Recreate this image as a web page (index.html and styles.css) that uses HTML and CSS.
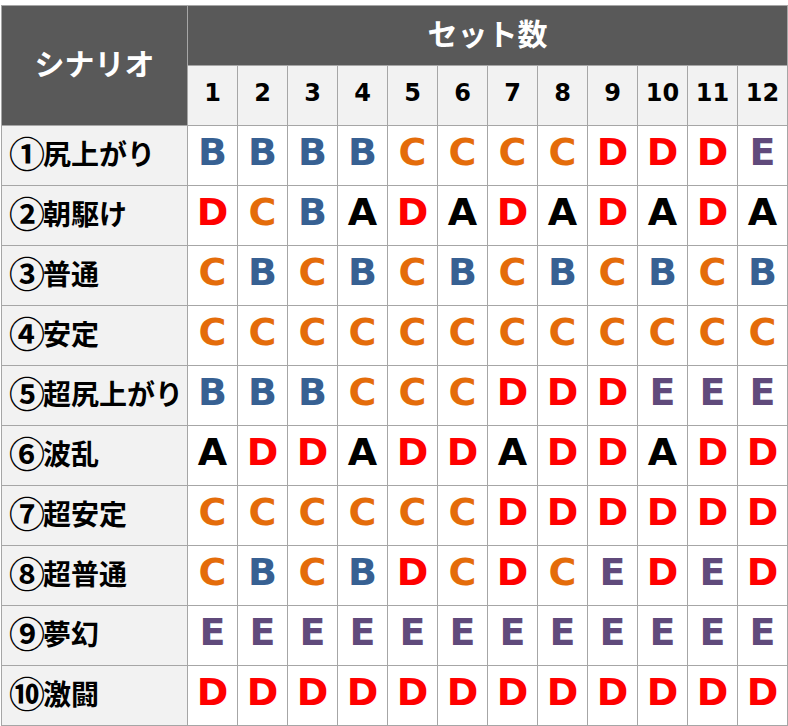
FILE: index.html
```html
<!DOCTYPE html>
<html lang="ja">
<head>
<meta charset="utf-8">
<link rel="stylesheet" href="styles.css">
</head>
<body>
<table class="grid">
  <colgroup>
    <col class="col-name">
    <col class="col-set"><col class="col-set"><col class="col-set"><col class="col-set"><col class="col-set"><col class="col-set">
    <col class="col-set"><col class="col-set"><col class="col-set"><col class="col-set"><col class="col-set"><col class="col-set">
  </colgroup>
  <thead>
    <tr>
      <th class="hd-dark hd-scen" rowspan="2">シナリオ</th>
      <th class="hd-dark hd-sets" colspan="12">セット数</th>
    </tr>
    <tr class="nums">
      <th>1</th><th>2</th><th>3</th><th>4</th><th>5</th><th>6</th><th>7</th><th>8</th><th>9</th><th>10</th><th>11</th><th>12</th>
    </tr>
  </thead>
  <tbody>
    <tr><th class="name"><span class="circ">①</span>尻上がり</th><td class="b">B</td><td class="b">B</td><td class="b">B</td><td class="b">B</td><td class="c">C</td><td class="c">C</td><td class="c">C</td><td class="c">C</td><td class="d">D</td><td class="d">D</td><td class="d">D</td><td class="e">E</td></tr>
    <tr><th class="name"><span class="circ">②</span>朝駆け</th><td class="d">D</td><td class="c">C</td><td class="b">B</td><td class="a">A</td><td class="d">D</td><td class="a">A</td><td class="d">D</td><td class="a">A</td><td class="d">D</td><td class="a">A</td><td class="d">D</td><td class="a">A</td></tr>
    <tr><th class="name"><span class="circ">③</span>普通</th><td class="c">C</td><td class="b">B</td><td class="c">C</td><td class="b">B</td><td class="c">C</td><td class="b">B</td><td class="c">C</td><td class="b">B</td><td class="c">C</td><td class="b">B</td><td class="c">C</td><td class="b">B</td></tr>
    <tr><th class="name"><span class="circ">④</span>安定</th><td class="c">C</td><td class="c">C</td><td class="c">C</td><td class="c">C</td><td class="c">C</td><td class="c">C</td><td class="c">C</td><td class="c">C</td><td class="c">C</td><td class="c">C</td><td class="c">C</td><td class="c">C</td></tr>
    <tr><th class="name"><span class="circ">⑤</span>超尻上がり</th><td class="b">B</td><td class="b">B</td><td class="b">B</td><td class="c">C</td><td class="c">C</td><td class="c">C</td><td class="d">D</td><td class="d">D</td><td class="d">D</td><td class="e">E</td><td class="e">E</td><td class="e">E</td></tr>
    <tr><th class="name"><span class="circ">⑥</span>波乱</th><td class="a">A</td><td class="d">D</td><td class="d">D</td><td class="a">A</td><td class="d">D</td><td class="d">D</td><td class="a">A</td><td class="d">D</td><td class="d">D</td><td class="a">A</td><td class="d">D</td><td class="d">D</td></tr>
    <tr><th class="name"><span class="circ">⑦</span>超安定</th><td class="c">C</td><td class="c">C</td><td class="c">C</td><td class="c">C</td><td class="c">C</td><td class="c">C</td><td class="d">D</td><td class="d">D</td><td class="d">D</td><td class="d">D</td><td class="d">D</td><td class="d">D</td></tr>
    <tr><th class="name"><span class="circ">⑧</span>超普通</th><td class="c">C</td><td class="b">B</td><td class="c">C</td><td class="b">B</td><td class="d">D</td><td class="c">C</td><td class="d">D</td><td class="c">C</td><td class="e">E</td><td class="d">D</td><td class="e">E</td><td class="d">D</td></tr>
    <tr><th class="name"><span class="circ">⑨</span>夢幻</th><td class="e">E</td><td class="e">E</td><td class="e">E</td><td class="e">E</td><td class="e">E</td><td class="e">E</td><td class="e">E</td><td class="e">E</td><td class="e">E</td><td class="e">E</td><td class="e">E</td><td class="e">E</td></tr>
    <tr><th class="name"><span class="circ">⑩</span>激闘</th><td class="d">D</td><td class="d">D</td><td class="d">D</td><td class="d">D</td><td class="d">D</td><td class="d">D</td><td class="d">D</td><td class="d">D</td><td class="d">D</td><td class="d">D</td><td class="d">D</td><td class="d">D</td></tr>
  </tbody>
</table>
</body>
</html>
```

FILE: styles.css
```css
html, body {
  margin: 0;
  padding: 0;
  background: #ffffff;
}
body {
  padding: 5px 0 0 1px;
}
.grid {
  border-collapse: separate;
  border-spacing: 0;
  table-layout: fixed;
  width: 787px;
  border-left: 1px solid #a6a6a6;
  border-top: 1px solid #a6a6a6;
  font-family: "DejaVu Sans", "Noto Sans CJK JP", sans-serif;
}
.col-name { width: 186px; }
.col-set { width: 50px; }
.grid th,
.grid td {
  box-sizing: border-box;
  height: 60px;
  padding: 0;
  border-right: 1px solid #a6a6a6;
  border-bottom: 1px solid #a6a6a6;
  text-align: center;
  vertical-align: middle;
  overflow: hidden;
}
.grid .hd-dark {
  background: #595959;
  color: #ffffff;
  font-family: "Noto Sans CJK JP", sans-serif;
  font-weight: 700;
  font-size: 30px;
  line-height: 1;
  padding-bottom: 7px;
}
.grid .nums th {
  background: #f2f2f2;
  color: #000000;
  font-family: "DejaVu Sans", sans-serif;
  font-weight: 700;
  font-size: 24px;
  line-height: 1;
  padding-bottom: 5px;
}
.grid .name {
  background: #f2f2f2;
  color: #000000;
  text-align: left;
  padding-left: 7px;
  padding-bottom: 7px;
  font-family: "Noto Sans CJK JP", sans-serif;
  font-weight: 700;
  font-size: 28px;
  line-height: 1;
  white-space: nowrap;
}
.circ {
  font-size: 36px;
  line-height: 1;
  margin-right: -2px;
  vertical-align: -3px;
}
.grid td {
  font-family: "DejaVu Sans", sans-serif;
  font-weight: 700;
  font-size: 38px;
  line-height: 1;
  padding-bottom: 8px;
}
.a { color: #000000; }
.b { color: #376092; }
.c { color: #e46c0a; }
.d { color: #ff0000; }
.e { color: #604a7b; }
```
